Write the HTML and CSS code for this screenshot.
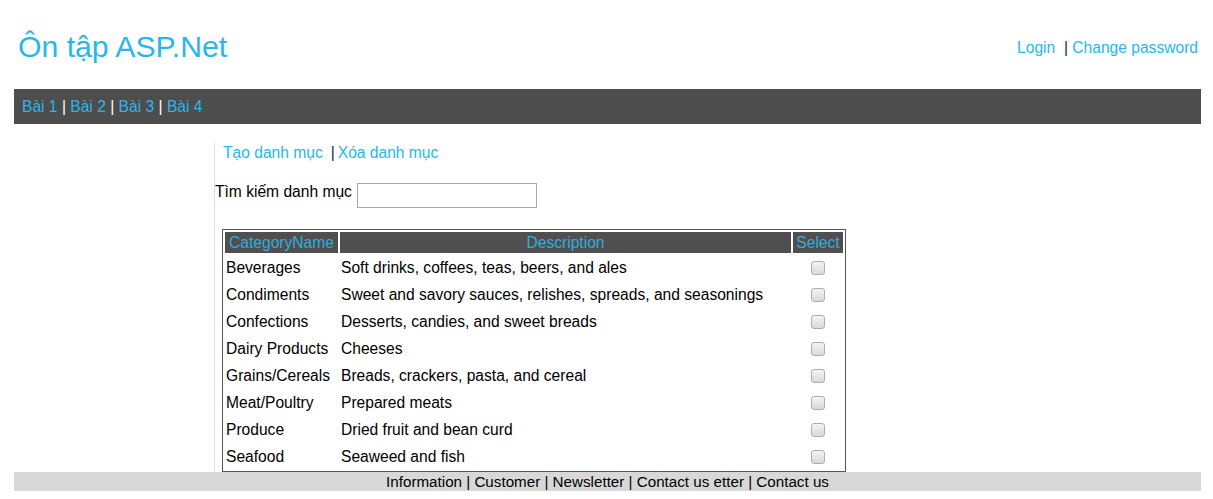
FILE: index.html
```html
<!DOCTYPE html>
<html>
<head>
<meta charset="utf-8">
<title>Ôn tập ASP.Net</title>
<link rel="stylesheet" href="styles.css">
</head>
<body>
<div class="page">
  <header class="header">
    <h1 class="title">Ôn tập ASP.Net</h1>
    <div class="account"><a href="#">Login</a>&nbsp; <span class="sep-dark">|</span> <a href="#">Change password</a></div>
  </header>
  <nav class="menu">
    <a href="#">Bài 1</a> <span class="sep-light">|</span> <a href="#">Bài 2</a> <span class="sep-light">|</span> <a href="#">Bài 3</a> <span class="sep-light">|</span> <a href="#">Bài 4</a>
  </nav>
  <div class="main">
    <aside class="sidebar"></aside>
    <section class="content">
      <div class="actions"><a href="#">Tạo danh mục</a><span class="sep-dark sep-actions">|</span><a href="#">Xóa danh mục</a></div>
      <div class="search">
        <span class="search-label">Tìm kiếm danh mục</span>
        <input class="search-input" type="text">
      </div>
      <table class="grid">
        <thead>
          <tr>
            <th class="c-name">CategoryName</th>
            <th class="c-desc">Description</th>
            <th class="c-sel">Select</th>
          </tr>
        </thead>
        <tbody>
          <tr><td>Beverages</td><td>Soft drinks, coffees, teas, beers, and ales</td><td class="c-sel"><input type="checkbox" class="chk"></td></tr>
          <tr><td>Condiments</td><td>Sweet and savory sauces, relishes, spreads, and seasonings</td><td class="c-sel"><input type="checkbox" class="chk"></td></tr>
          <tr><td>Confections</td><td>Desserts, candies, and sweet breads</td><td class="c-sel"><input type="checkbox" class="chk"></td></tr>
          <tr><td>Dairy Products</td><td>Cheeses</td><td class="c-sel"><input type="checkbox" class="chk"></td></tr>
          <tr><td>Grains/Cereals</td><td>Breads, crackers, pasta, and cereal</td><td class="c-sel"><input type="checkbox" class="chk"></td></tr>
          <tr><td>Meat/Poultry</td><td>Prepared meats</td><td class="c-sel"><input type="checkbox" class="chk"></td></tr>
          <tr><td>Produce</td><td>Dried fruit and bean curd</td><td class="c-sel"><input type="checkbox" class="chk"></td></tr>
          <tr><td>Seafood</td><td>Seaweed and fish</td><td class="c-sel"><input type="checkbox" class="chk"></td></tr>
        </tbody>
      </table>
    </section>
  </div>
  <footer class="footer">Information | Customer | Newsletter | Contact us etter | Contact us</footer>
</div>
</body>
</html>
```
FILE: styles.css
```css
html, body {
  margin: 0;
  padding: 0;
  background: #fff;
}
body {
  font-family: "Liberation Sans", Arial, sans-serif;
  font-size: 15.6px;
  color: #000;
}
a {
  color: #29b6e9;
  text-decoration: none;
}
.page {
  margin: 0 12px 0 14px;
}
.header {
  display: flex;
  justify-content: space-between;
  align-items: flex-start;
  height: 89px;
}
.title {
  margin: 29px 0 0 4px;
  font-size: 30.2px;
  font-weight: normal;
  line-height: 36px;
  color: #29b6e9;
}
.account {
  margin: 39px 3px 0 0;
  line-height: 18px;
}
.sep-dark {
  color: #1a1a40;
}
.sep-actions {
  margin: 0 3px 0 8px;
}
.sep-light {
  color: #fff;
}
.menu {
  height: 35px;
  line-height: 35px;
  background: #4d4d4d;
  padding-left: 8px;
}
.main {
  display: flex;
  padding-top: 19px;
}
.sidebar {
  width: 200px;
  flex: none;
}
.content {
  border-left: 1px solid #dcdcdc;
  flex: 1;
}
.actions {
  padding-left: 8px;
  line-height: 18px;
  margin-top: 1px;
}
.search {
  display: flex;
  align-items: flex-start;
  margin-top: 21px;
  height: 46px;
}
.search-label {
  line-height: 18px;
}
.search-input {
  margin: 0 0 0 5px;
  width: 180px;
  height: 25px;
  box-sizing: border-box;
  border: 1px solid #a9a9a9;
  padding: 0;
  font: inherit;
}
.grid {
  margin-left: 7px;
  border: 1px solid #555;
  border-spacing: 2px;
  table-layout: fixed;
  width: 624px;
}
.grid th {
  background: #4f4f4f;
  color: #33acdd;
  font-weight: normal;
  height: 21px;
  padding: 0;
  text-align: center;
  line-height: 20px;
}
.grid td {
  height: 25px;
  padding: 0 0 0 1px;
  line-height: 25px;
  white-space: nowrap;
}
.c-name { width: 113px; }
.c-desc { width: 451px; }
.c-sel { width: 50px; }
.grid td.c-sel {
  text-align: center;
  padding: 0;
}
.chk {
  appearance: none;
  -webkit-appearance: none;
  width: 14px;
  height: 14px;
  margin: 0 0 2px -1px;
  vertical-align: middle;
  border: 1px solid #adadad;
  border-radius: 3px;
  background: linear-gradient(#f4f4f4, #d9d9d9);
  box-sizing: border-box;
}
.footer {
  background: #d8d8d8;
  height: 19px;
  line-height: 19px;
  font-size: 15.2px;
  text-align: center;
  color: #000;
}
```
